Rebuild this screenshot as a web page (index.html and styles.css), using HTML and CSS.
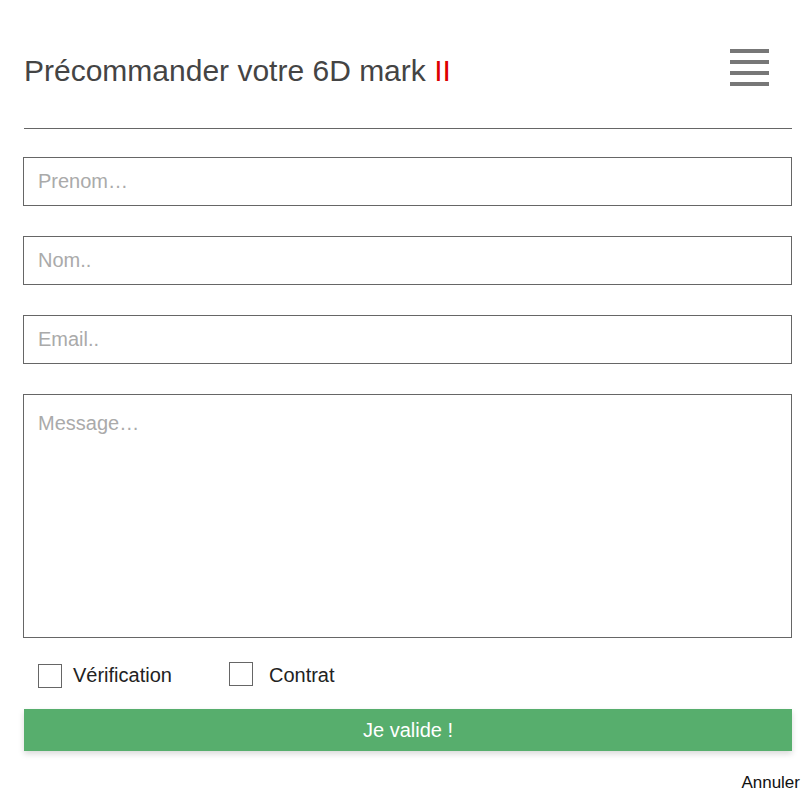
FILE: index.html
```html
<!DOCTYPE html>
<html lang="fr">
<head>
<meta charset="utf-8">
<title>Précommander</title>
<link rel="stylesheet" href="styles.css">
</head>
<body>
<div class="page">
  <header class="header">
    <h1 class="title">Précommander votre 6D mark <span class="red">II</span></h1>
    <div class="burger"><span></span><span></span><span></span><span></span></div>
  </header>
  <form class="form">
    <input class="field" type="text" placeholder="Prenom…">
    <input class="field" type="text" placeholder="Nom..">
    <input class="field" type="text" placeholder="Email..">
    <textarea class="field area" placeholder="Message…"></textarea>
    <div class="checks">
      <label class="check c1"><span class="box"></span><span class="lbl">Vérification</span></label>
      <label class="check c2"><span class="box"></span><span class="lbl">Contrat</span></label>
    </div>
    <button class="btn" type="button">Je valide !</button>
    <div class="cancel-row"><a class="cancel">Annuler</a></div>
  </form>
</div>
</body>
</html>
```
FILE: styles.css
```css
* { box-sizing: border-box; }
html, body { margin: 0; padding: 0; background: #fff; }
body { font-family: "Liberation Sans", Arial, sans-serif; }
.page { width: 812px; padding: 0 20px 0 23px; }
.header {
  height: 129px;
  display: flex;
  align-items: flex-start;
  justify-content: space-between;
  border-bottom: 1px solid #666;
  margin-left: 1px;
}
.title {
  margin: 54px 0 0 0;
  font-weight: normal;
  font-size: 30px;
  line-height: 34px;
  color: #444;
}
.red { color: #d00; }
.burger {
  width: 39px;
  display: flex;
  flex-direction: column;
  gap: 7px;
  margin: 49px 23px 0 0;
}
.burger span { display: block; height: 4px; background: #777; }
.form { display: flex; flex-direction: column; padding-top: 28px; }
.field {
  display: block;
  width: 769px;
  height: 49px;
  border: 1px solid #666;
  border-radius: 0;
  margin: 0 0 30px 0;
  padding: 0 14px;
  font-family: "Liberation Sans", Arial, sans-serif;
  font-size: 20px;
  color: #333;
  outline: none;
}
.field::placeholder { color: #aaa; }
.area { height: 244px; padding: 17px 14px; resize: none; margin-bottom: 23px; }
.checks { display: flex; align-items: center; height: 30px; padding-left: 15px; }
.check { display: flex; align-items: center; font-size: 20px; color: #222; }
.box { width: 24px; height: 24px; border: 1px solid #666; display: block; }
.c1 .box { margin-top: 0; }
.c1 .lbl { margin-left: 11px; }
.c2 { margin-left: 57px; }
.c2 .box { margin-top: -4px; }
.c2 .lbl { margin-left: 16px; }
.lbl { margin-top: -2px; }
.btn {
  margin: 18px 0 0 1px;
  width: 768px;
  height: 42px;
  background: #57ae6d;
  border: none;
  color: #fff;
  font-family: "Liberation Sans", Arial, sans-serif;
  font-size: 20px;
  box-shadow: 0 3px 6px rgba(0,0,0,0.15);
}
.cancel-row { display: flex; justify-content: flex-end; margin-right: -8px; padding-top: 22px; }
.cancel { font-size: 17px; color: #111; }
```
